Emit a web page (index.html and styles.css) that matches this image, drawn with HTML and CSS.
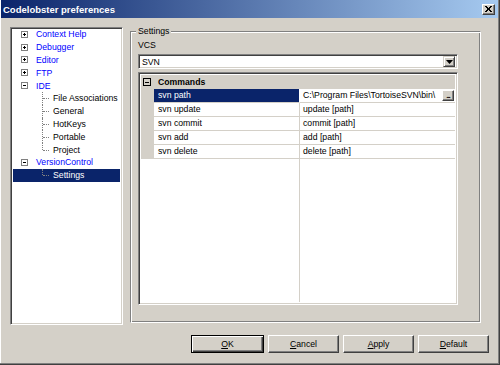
FILE: index.html
```html
<!DOCTYPE html>
<html lang="en">
<head>
  <meta charset="UTF-8">
  <title>Codelobster preferences</title>
  <link rel="stylesheet" href="styles.css">
</head>
<body>
  <div class="window">
    <div class="titlebar">
      <span class="title">Codelobster preferences</span>
      <span class="close">
        <svg width="7" height="6" viewBox="0 0 7 6"><path d="M0 0L6 6M1 0L7 6M6 0L0 6M7 0L1 6" stroke="#000" stroke-width="1"/></svg>
      </span>
    </div>

    <div class="content">
      <div class="tree">
        <div class="node top"><span class="toggle plus"></span><span class="label">Context Help</span></div>
        <div class="node top"><span class="toggle plus"></span><span class="label">Debugger</span></div>
        <div class="node top"><span class="toggle plus"></span><span class="label">Editor</span></div>
        <div class="node top"><span class="toggle plus"></span><span class="label">FTP</span></div>
        <div class="node top"><span class="toggle"></span><span class="label">IDE</span></div>
        <div class="node child"><span class="branch"></span><span class="label">File Associations</span></div>
        <div class="node child"><span class="branch"></span><span class="label">General</span></div>
        <div class="node child"><span class="branch"></span><span class="label">HotKeys</span></div>
        <div class="node child"><span class="branch"></span><span class="label">Portable</span></div>
        <div class="node child"><span class="branch last"></span><span class="label">Project</span></div>
        <div class="node top"><span class="toggle"></span><span class="label">VersionControl</span></div>
        <div class="node child selected"><span class="branch last"></span><span class="label">Settings</span></div>
      </div>

      <fieldset class="group">
        <legend>Settings</legend>
        <div class="field-label">VCS</div>
        <div class="combo">
          <span class="combo-text">SVN</span>
          <span class="drop"><svg width="7" height="4" viewBox="0 0 7 4"><path d="M0 0H7L3.5 4Z" fill="#000"/></svg></span>
        </div>

        <div class="grid">
          <div class="cat">
            <span class="cat-box"><span class="toggle"></span></span>
            <span class="cat-name">Commands</span>
          </div>
          <div class="prop">
            <span class="gutter"></span>
            <span class="name selected">svn path</span>
            <span class="value">
              <span class="value-text">C:\Program Files\TortoiseSVN\bin\</span>
              <span class="more">...</span>
            </span>
          </div>
          <div class="prop">
            <span class="gutter"></span>
            <span class="name">svn update</span>
            <span class="value"><span class="value-text">update [path]</span></span>
          </div>
          <div class="prop">
            <span class="gutter"></span>
            <span class="name">svn commit</span>
            <span class="value"><span class="value-text">commit [path]</span></span>
          </div>
          <div class="prop">
            <span class="gutter"></span>
            <span class="name">svn add</span>
            <span class="value"><span class="value-text">add [path]</span></span>
          </div>
          <div class="prop">
            <span class="gutter"></span>
            <span class="name">svn delete</span>
            <span class="value"><span class="value-text">delete [path]</span></span>
          </div>
          <div class="prop filler">
            <span class="gutter"></span>
            <span class="name"></span>
            <span class="value"></span>
          </div>
        </div>
      </fieldset>
    </div>

    <div class="buttons">
      <button class="btn default-btn"><u>O</u>K</button>
      <button class="btn"><u>C</u>ancel</button>
      <button class="btn"><u>A</u>pply</button>
      <button class="btn"><u>D</u>efault</button>
    </div>
  </div>
</body>
</html>
```

FILE: styles.css
```css
body {
  margin: 0;
  font-family: "Liberation Sans", Arial, sans-serif;
  font-size: 8.7px;
  color: #000;
}

.window {
  width: 500px;
  height: 365px;
  box-sizing: border-box;
  background-color: #d4d0c8;
  border-right: 1px solid #404040;
  border-bottom: 1px solid #404040;
  box-shadow: inset -1px -1px #808080, inset 1px 0 #fff;
  display: flex;
  flex-direction: column;
}

.titlebar {
  height: 18px;
  margin: 0 1px 0 1px;
  padding: 0 2px 0 2px;
  background: linear-gradient(to right, #0a246a, #a6caf0);
  display: flex;
  align-items: center;
  justify-content: space-between;
}

.title {
  color: #fff;
  font-weight: bold;
  font-size: 9.5px;
}

.close {
  width: 13px;
  height: 11px;
  box-sizing: border-box;
  background-color: #d4d0c8;
  border: 1px solid;
  border-color: #fff #404040 #404040 #fff;
  box-shadow: inset -1px -1px #808080;
  display: flex;
  align-items: center;
  justify-content: center;
  margin-right: 1px;
}

.close svg {
  display: block;
}

.content {
  display: flex;
  align-items: flex-start;
  gap: 7px;
  padding: 9px 0 0 10px;
  height: 307px;
  box-sizing: border-box;
}

/* sunken white boxes */
.tree, .combo, .grid {
  box-sizing: border-box;
  background-color: #fff;
  border: 1px solid;
  border-color: #808080 #fff #fff #808080;
  box-shadow: inset 1px 1px #404040, inset -1px -1px #d4d0c8;
}

.tree {
  width: 113px;
  height: 298px;
  padding: 0 2px;
}

.node {
  height: 12.8px;
  display: flex;
  align-items: center;
  white-space: nowrap;
}

.node.top {
  padding-left: 8px;
}

.node.top .label {
  color: #0000ff;
  margin-left: 8px;
}

.node.child {
  padding-left: 29px;
}

.node.child .label {
  margin-left: 4px;
}

.node.selected {
  background-color: #0a246a;
}

.node.selected .label {
  color: #fff;
}

.toggle {
  width: 7px;
  height: 7px;
  box-sizing: border-box;
  border: 1px solid #808080;
  background-color: #fff;
  position: relative;
  flex: none;
}

.toggle::before {
  content: "";
  position: absolute;
  left: 1px;
  top: 2px;
  width: 3px;
  height: 1px;
  background-color: #000;
}

.toggle.plus::after {
  content: "";
  position: absolute;
  left: 2px;
  top: 1px;
  width: 1px;
  height: 3px;
  background-color: #000;
}

.branch {
  width: 7px;
  height: 100%;
  position: relative;
  flex: none;
}

.branch::before {
  content: "";
  position: absolute;
  left: 0;
  top: 0;
  bottom: 0;
  border-left: 1px dotted #808080;
}

.branch.last::before {
  bottom: 50%;
}

.branch::after {
  content: "";
  position: absolute;
  left: 1px;
  right: 0;
  top: 50%;
  border-top: 1px dotted #808080;
}

.group {
  margin: -1px 0 0 0;
  width: 351px;
  height: 297px;
  box-sizing: border-box;
  padding: 4px 22px 0 7px;
  border: 1px solid;
  border-color: #808080 #fff #fff #808080;
  box-shadow: inset 1px 1px #fff, inset -1px -1px #808080;
  min-width: 0;
}

.group legend {
  padding: 0 2px;
  margin-left: -2px;
  line-height: 10px;
  background-color: #d4d0c8;
}

.field-label {
  line-height: 11px;
}

.combo {
  margin-top: 3px;
  height: 15px;
  display: flex;
  align-items: center;
  padding: 2px;
}

.combo-text {
  flex: 1;
  padding-left: 1px;
}

.drop {
  width: 12px;
  height: 11px;
  box-sizing: border-box;
  background-color: #d4d0c8;
  border: 1px solid;
  border-color: #d4d0c8 #404040 #404040 #d4d0c8;
  box-shadow: inset 1px 1px #fff, inset -1px -1px #808080;
  display: flex;
  align-items: center;
  justify-content: center;
}

.drop svg {
  display: block;
}

.grid {
  margin-top: 3px;
  height: 233px;
  padding: 2px;
  display: flex;
  flex-direction: column;
}

.cat {
  height: 14px;
  background-color: #d4d0c8;
  display: flex;
  align-items: center;
}

.cat-box {
  width: 13px;
  display: flex;
  padding-left: 2px;
}

.cat-box .toggle {
  width: 8px;
  height: 8px;
  border-color: #000;
  background-color: transparent;
}

.cat-box .toggle::before {
  left: 1px;
  top: 3px;
  width: 4px;
}

.cat-name {
  font-weight: bold;
  margin-left: 2px;
}

.prop {
  height: 14px;
  display: flex;
  white-space: nowrap;
}

.gutter {
  width: 13px;
  flex: none;
  background-color: #d4d0c8;
}

.name {
  width: 146px;
  flex: none;
  box-sizing: border-box;
  padding-left: 4px;
  line-height: 13px;
  border-right: 1px solid #d4d0c8;
  border-bottom: 1px solid #d4d0c8;
}

.name.selected {
  background-color: #0a246a;
  color: #fff;
  border-right-color: #fff;
}

.value {
  flex: 1;
  display: flex;
  align-items: center;
  padding-left: 3px;
  border-bottom: 1px solid #d4d0c8;
}

.value-text {
  flex: 1;
  line-height: 13px;
}

.more {
  width: 12px;
  height: 11px;
  box-sizing: border-box;
  margin-right: 1px;
  background-color: #d4d0c8;
  border: 1px solid;
  border-color: #fff #404040 #404040 #fff;
  box-shadow: inset -1px -1px #808080;
  font-size: 8px;
  font-weight: bold;
  line-height: 10px;
  text-align: center;
  letter-spacing: -1px;
}

.prop.filler {
  flex: 1;
}

.prop.filler .gutter {
  background-color: #fff;
}

.prop.filler .name,
.prop.filler .value {
  border-bottom: none;
}

.buttons {
  display: flex;
  justify-content: flex-end;
  gap: 4px;
  padding: 10px 10px 0 0;
}

.btn {
  width: 71px;
  height: 18px;
  box-sizing: border-box;
  padding: 0;
  font-family: "Liberation Sans", Arial, sans-serif;
  font-size: 8.7px;
  color: #000;
  background-color: #d4d0c8;
  border: 1px solid;
  border-color: #fff #404040 #404040 #fff;
  box-shadow: inset -1px -1px #808080;
}

.default-btn {
  width: 73px;
  border-color: #000;
  box-shadow: inset 1px 1px #fff, inset -1px -1px #404040, inset -2px -2px #808080;
}
```
